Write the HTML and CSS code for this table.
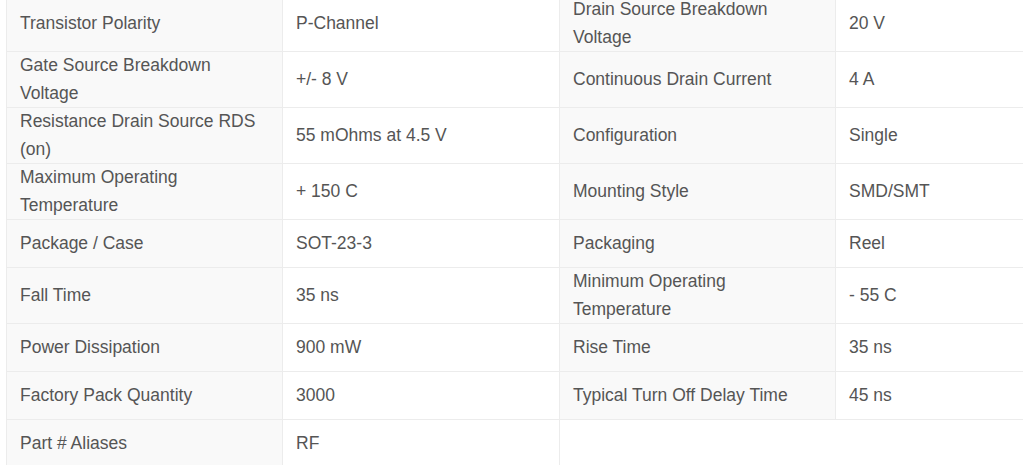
FILE: index.html
```html
<!DOCTYPE html>
<html>
<head>
<meta charset="utf-8">
<link rel="stylesheet" href="styles.css">
</head>
<body>
<div class="page">
<table class="specs">
  <colgroup>
    <col class="c-label"><col class="c-value"><col class="c-label"><col class="c-value-last">
  </colgroup>
  <tbody>
    <tr class="two">
      <td class="label">Transistor Polarity</td><td class="value">P-Channel</td>
      <td class="label">Drain Source Breakdown Voltage</td><td class="value">20 V</td>
    </tr>
    <tr class="two">
      <td class="label">Gate Source Breakdown Voltage</td><td class="value">+/- 8 V</td>
      <td class="label">Continuous Drain Current</td><td class="value">4 A</td>
    </tr>
    <tr class="two">
      <td class="label">Resistance Drain Source RDS (on)</td><td class="value">55 mOhms at 4.5 V</td>
      <td class="label">Configuration</td><td class="value">Single</td>
    </tr>
    <tr class="two">
      <td class="label">Maximum Operating Temperature</td><td class="value">+ 150 C</td>
      <td class="label">Mounting Style</td><td class="value">SMD/SMT</td>
    </tr>
    <tr class="one">
      <td class="label">Package / Case</td><td class="value">SOT-23-3</td>
      <td class="label">Packaging</td><td class="value">Reel</td>
    </tr>
    <tr class="two">
      <td class="label">Fall Time</td><td class="value">35 ns</td>
      <td class="label">Minimum Operating Temperature</td><td class="value">- 55 C</td>
    </tr>
    <tr class="one">
      <td class="label">Power Dissipation</td><td class="value">900 mW</td>
      <td class="label">Rise Time</td><td class="value">35 ns</td>
    </tr>
    <tr class="one">
      <td class="label">Factory Pack Quantity</td><td class="value">3000</td>
      <td class="label">Typical Turn Off Delay Time</td><td class="value">45 ns</td>
    </tr>
    <tr class="one">
      <td class="label">Part # Aliases</td><td class="value">RF</td>
    </tr>
  </tbody>
</table>
</div>
</body>
</html>
```
FILE: styles.css
```css
html, body {
  margin: 0;
  padding: 0;
  background: #ffffff;
  overflow: hidden;
}
.page {
  width: 1023px;
  height: 465px;
  overflow: hidden;
}
.specs {
  margin: -5px 0 0 6px;
  width: 1026px;
  border-collapse: collapse;
  table-layout: fixed;
  font-family: "Liberation Sans", Arial, sans-serif;
  font-size: 17.5px;
  line-height: 27.5px;
  color: #555555;
}
.c-label { width: 276px; }
.c-value { width: 277px; }
.c-value-last { width: 197px; }
.specs td {
  border: 1px solid #ececec;
  padding: 0 13px;
  vertical-align: middle;
  height: 48px;
  box-sizing: border-box;
}
.specs .two td { height: 55px; }
.specs td.label {
  background: #f9f9f9;
}
.specs td.value {
  background: #ffffff;
}
```
